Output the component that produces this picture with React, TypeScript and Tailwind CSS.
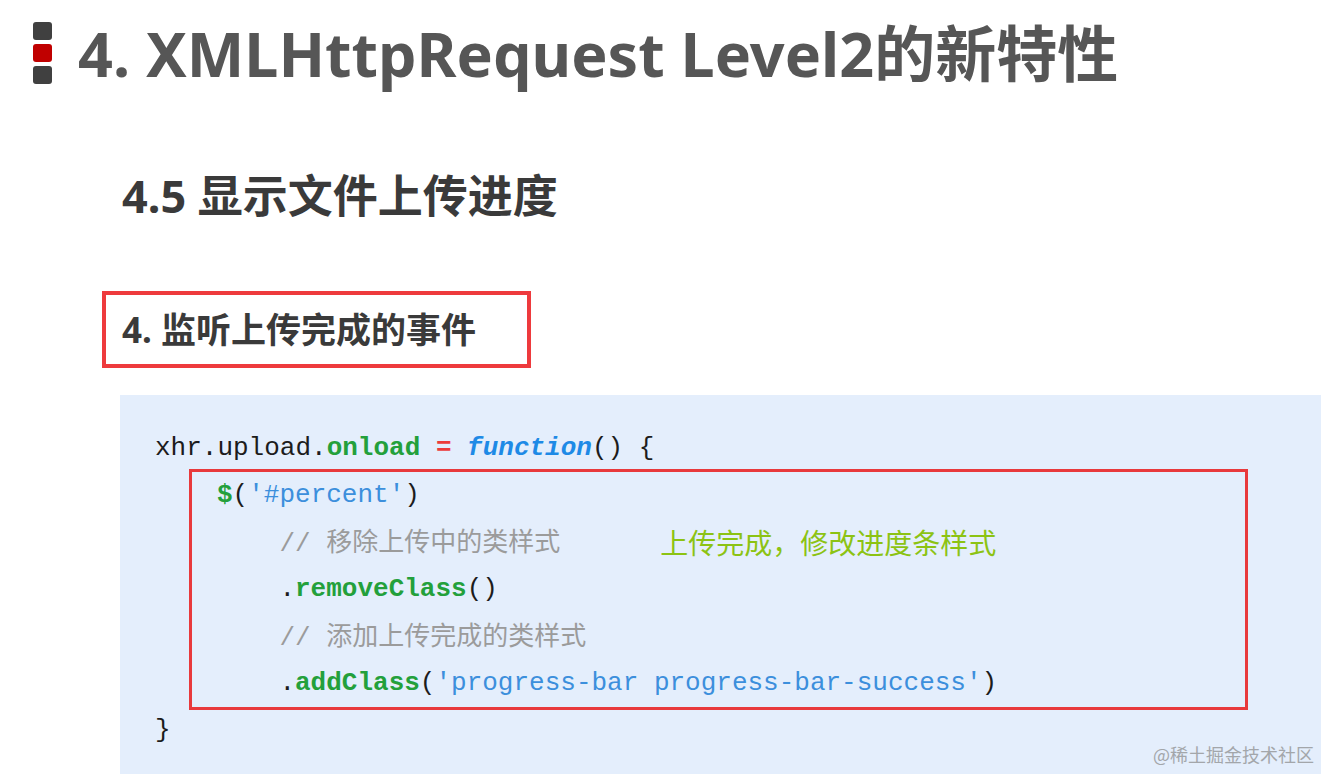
const mono = "font-['Liberation_Mono','Noto_Sans_CJK_SC',monospace]";
const line = "h-[47px] leading-[47px]";

function Comment({ text }: { text: string }) {
  return (
    <span className="inline-block -translate-y-[3px] text-[#9b9b9b]">
      {"// "}
      <span className="font-['Noto_Sans_CJK_SC',sans-serif]">{text}</span>
    </span>
  );
}

export default function App() {
  return (
    <div className="relative flex h-[774px] w-[1321px] flex-col overflow-hidden bg-white font-['Noto_Sans','Noto_Sans_CJK_SC',sans-serif]">
      {/* slide title */}
      <div className="flex items-center pl-[33px] pt-[22px]">
        <div className="flex flex-col gap-[4px]">
          <span className="h-[18px] w-[19px] rounded-[3px] bg-[#404040]" />
          <span className="h-[18px] w-[19px] rounded-[3px] bg-[#c00000]" />
          <span className="h-[18px] w-[19px] rounded-[3px] bg-[#404040]" />
        </div>
        <h1 className="ml-[26px] text-[61px] leading-none font-bold text-[#565656]">
          4. XMLHttpRequest Level2的新特性
        </h1>
      </div>

      <h2 className="mt-[89px] ml-[122px] text-[45px] leading-none font-bold text-[#3a3a3a]">
        4.5 显示文件上传进度
      </h2>

      <div className="mt-[73px] ml-[102px] flex h-[77px] w-[429px] items-center border-4 border-[#ee3a3d] pl-[16px]">
        <h3 className="text-[35px] leading-none font-bold text-[#3a3a3a]">4. 监听上传完成的事件</h3>
      </div>

      <div className={`mt-[27px] ml-[120px] flex-1 bg-[#e4eefc] pt-[30px] pl-[35px] text-[26px] whitespace-pre text-[#1c1c1c] ${mono}`}>
        <div className={line}>
          xhr.upload.<span className="font-bold text-[#23a03b]">onload</span>{" "}
          <span className="font-bold text-[#ec3b3b]">=</span>{" "}
          <span className="font-bold italic text-[#1e8ae6]">function</span>() {"{"}
        </div>

        <div className="-my-[3px] ml-[34px] w-[1059px] border-[3px] border-[#e8393c] pl-[25px]">
          <div className={line}>
            <span className="font-bold text-[#23a03b]">$</span>(<span className="text-[#3c8fdc]">'#percent'</span>)
          </div>
          <div className={line}>
            {"    "}
            <Comment text="移除上传中的类样式" />
            <span className="ml-[100px] font-['Noto_Sans_CJK_SC',sans-serif] text-[28px] text-[#8cc313]">
              上传完成，修改进度条样式
            </span>
          </div>
          <div className={line}>
            {"    ."}<span className="font-bold text-[#23a03b]">removeClass</span>()
          </div>
          <div className={line}>
            {"    "}
            <Comment text="添加上传完成的类样式" />
          </div>
          <div className={line}>
            {"    ."}<span className="font-bold text-[#23a03b]">addClass</span>(
            <span className="text-[#3c8fdc]">'progress-bar progress-bar-success'</span>)
          </div>
        </div>

        <div className={line}>{"}"}</div>
      </div>

      <span className="absolute right-[7px] bottom-[6px] font-['Noto_Sans_CJK_SC',sans-serif] text-[18px] text-[#a3a6aa]">
        @稀土掘金技术社区
      </span>
    </div>
  );
}
